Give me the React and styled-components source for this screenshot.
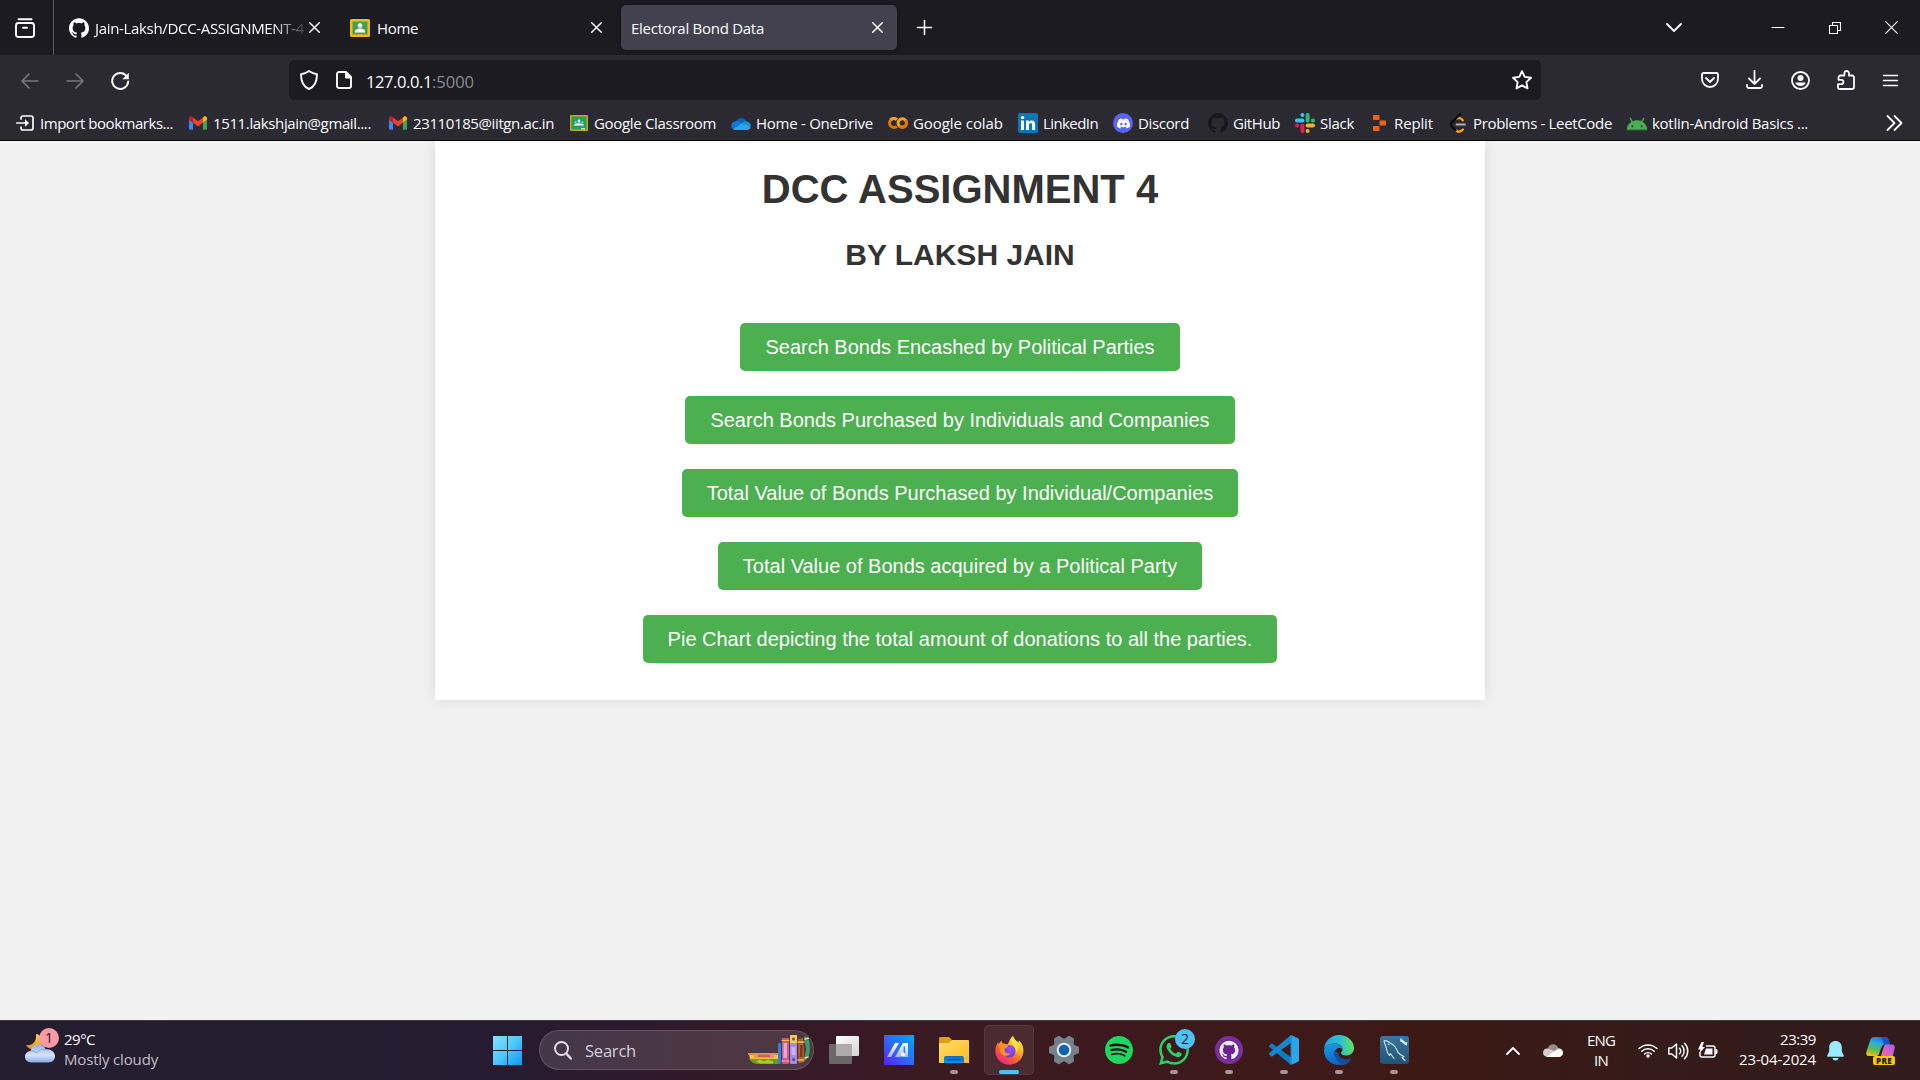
import React, { useLayoutEffect, useRef, useState } from 'react';
import styled, { createGlobalStyle } from 'styled-components';
import { SiDiscord, SiGithub, SiSpotify, SiWhatsapp } from 'react-icons/si';

const Global = createGlobalStyle`
  * { box-sizing: border-box; }
  body { margin: 0; overflow: hidden; background: #f1f1f1; }
  button { border: 0; padding: 0; margin: 0; background: none; color: inherit; font: inherit; }
`;

const ui = '"Open Sans", "Noto Sans", sans-serif';

const Screen = styled.div`
  width: 1920px; height: 1080px;
  display: flex; flex-direction: column;
  font-family: ${ui};
  color: #fbfbfe;
`;

/* ---------- fitted text ---------- */
const FitBox = styled.span`
  display: block; flex: none; white-space: pre; overflow: visible;
  width: ${p => p.$w}px;
  font-size: ${p => p.$size || 15}px;
  line-height: ${p => p.$lh || 20}px;
  color: ${p => p.$color || 'inherit'};
`;
function Fit({ w, size, lh, color, children }) {
  const ref = useRef(null);
  const [ls, setLs] = useState(0);
  useLayoutEffect(() => {
    const n = ref.current.textContent.length;
    const natural = ref.current.getBoundingClientRect().width - ls * n;
    setLs((w - natural) / n);
  }, [w]);
  return (
    <FitBox $w={w} $size={size} $lh={lh} $color={color}>
      <span ref={ref} style={{ letterSpacing: `${ls}px` }}>{children}</span>
    </FitBox>
  );
}

const Svg = styled.svg.attrs(p => ({
  fill: 'none', stroke: 'currentColor', strokeWidth: p.strokeWidth || 1.6,
  strokeLinecap: 'round', strokeLinejoin: 'round',
}))`
  display: block; flex: none; overflow: visible;
`;

/* ---------- tab strip ---------- */
const TabStrip = styled.div`
  height: 55px; display: flex; align-items: center; flex: none;
  background: #1c1b22;
`;
const ViewButton = styled.button`
  width: 54px; height: 55px; padding: 0 0 0 14px;
  border-right: 1px solid #5b5a62;
  display: flex; align-items: center;
`;
const Tab = styled.div`
  height: 45px; width: ${p => p.$w}px; margin-left: ${p => p.$ml}px;
  padding: 0 14px 0 ${p => p.$pl}px;
  display: flex; align-items: center; gap: ${p => p.$gap || 6}px;
  border-radius: 5px;
  background: ${p => (p.$active ? '#42414d' : 'transparent')};
  box-shadow: ${p => (p.$active ? '0 0 4px rgba(0,0,0,.45)' : 'none')};
`;
const TabLabel = styled.div`
  flex: 1; min-width: 0; padding: 1px 0 0 ${p => p.$inset || 0}px;
  mask-image: ${p => (p.$fade ? 'linear-gradient(to left, rgba(0,0,0,.1), #000 34px)' : 'none')};
`;
const WindowControls = styled.div`
  margin-left: auto; height: 55px; display: flex; align-items: center;
`;
const Slot = styled.div`
  width: ${p => p.$w}px; display: flex; flex: none; justify-content: center;
  color: ${p => p.$color || 'inherit'};
`;

/* ---------- navigation ---------- */
const NavBar = styled.div`
  height: 45px; padding-top: 5px; display: flex; flex: none;
  background: #2b2a33;
`;
const NavButtons = styled.div`
  width: 289px; height: 40px; padding: 2px 0 0 7px; display: flex; align-items: center;
`;
const UrlBar = styled.div`
  width: 1252px; height: 40px; padding: 0 8px 0 10px; border-radius: 5px;
  display: flex; align-items: center; background: #1c1b22;
`;
const PageInfo = styled.div`padding-left: 17px;`;
const UrlText = styled.div`
  flex: 1; display: flex; padding: 3px 0 0 14px;
`;
const NavTools = styled.div`
  height: 40px; margin-left: auto; padding-right: 7px; display: flex; align-items: center;
`;

/* ---------- bookmarks ---------- */
const Bookmarks = styled.div`
  height: 41px; padding: 6px 14px 0 15px; flex: none;
  display: flex; align-items: center;
  background: #2b2a33; border-bottom: 1px solid #060608;
`;
const Bookmark = styled.div`
  display: flex; align-items: center; gap: 5px; margin-right: ${p => p.$mr || 15}px;
`;
const MarkIcon = styled.div`
  width: 20px; height: 20px; display: flex; align-items: center; justify-content: center;
`;
const More = styled.div`margin-left: auto; padding-right: 3px;`;

/* ---------- page ---------- */
const Page = styled.main`
  flex: 1; min-height: 0; overflow: hidden; background: #f1f1f1;
  display: flex; justify-content: center; align-items: flex-start;
`;
const Card = styled.section`
  width: 1050px; height: 559px; padding-top: 25px;
  display: flex; flex-direction: column; align-items: center;
  background: #fff; box-shadow: 0 0 13px rgba(0,0,0,.1);
  font-family: "Liberation Sans", Arial, sans-serif; color: #333;
`;
const Title = styled.h1`
  margin: 0; font-size: 40px; line-height: 46px; font-weight: 700;
`;
const Subtitle = styled.h2`
  margin: 26px 0 0; font-size: 30px; line-height: 34px; font-weight: 700;
`;
const Actions = styled.div`
  margin-top: 51px; display: flex; flex-direction: column; align-items: center; gap: 25px;
`;
const Action = styled.button`
  && { height: 48px; padding: 0 25px; border-radius: 5px;
  background: #4caf50; color: #fff; font-size: 20px; line-height: 48px; }
`;

/* ---------- taskbar ---------- */
const Taskbar = styled.footer`
  height: 60px; flex: none; display: flex; align-items: stretch;
  border-top: 1px solid #3c3a42;
  background: linear-gradient(90deg, #241d2f 0, #231e30 280px, #261b30 500px, #33192a 720px, #391a24 900px, #3e191c 1150px, #3d1915 1440px, #361b18 1600px, #311b1d 1920px);
`;
const Weather = styled.div`
  width: 480px; padding-left: 25px; display: flex; gap: 4px;
`;
const WeatherArt = styled.div`position: relative; width: 35px; padding-top: 12px;`;
const Lines = styled.div`
  padding: ${p => p.$pt ?? 8}px 0 ${p => p.$pb || 0}px; display: flex; flex-direction: column;
  align-items: ${p => p.$align || 'flex-start'};
`;
const Badge = styled.span`
  position: absolute; left: ${p => p.$x}px; top: ${p => p.$y}px;
  width: 20px; height: 20px; border-radius: 50%;
  background: ${p => p.$bg}; color: #1b1b1b;
  font-size: 14px; line-height: 20px; text-align: center;
`;
const StartCell = styled.div`width: 59px; display: flex; align-items: center; padding-left: 13px;`;
const SearchBox = styled.div`
  width: 275px; height: 40px; margin-top: 9px; padding: 0 2px 0 14px;
  display: flex; align-items: center; border-radius: 20px; overflow: hidden;
  background: rgba(255,255,255,.13);
  border: 1px solid rgba(255,255,255,.14);
`;
const SearchText = styled.div`flex: 1; padding: 2px 0 0 13px;`;
const Apps = styled.div`display: flex; padding-left: 5px;`;
const AppTile = styled.div`
  position: relative; width: 50px; height: 50px; margin: 4px 5px 0 0;
  display: flex; align-items: center; justify-content: center; border-radius: 5px;
  background: ${p => (p.$active ? 'rgba(255,255,255,.08)' : 'none')};
  border: 1px solid ${p => (p.$active ? 'rgba(255,255,255,.07)' : 'transparent')};
  &::after {
    content: ""; position: absolute; bottom: 0; left: 50%; transform: translateX(-50%);
    width: ${p => (p.$active ? 20 : p.$open ? 8 : 0)}px; height: 4px; border-radius: 2px;
    background: ${p => (p.$active ? '#4cc2ff' : '#a39497')};
  }
`;
const Tray = styled.div`margin-left: auto; display: flex; align-items: center;`;
const TraySlot = styled.div`
  display: flex; justify-content: flex-start; flex: none; width: ${p => p.$w}px;
`;
const CopilotMark = styled.div`
  position: relative; width: 54px; height: 28px;
`;
const PreTag = styled.span`
  position: absolute; left: 7px; top: 19px; width: 22px; height: 9px; border-radius: 2px;
  background: #ffc800; color: #1a1a1a; font: 800 8px/9px ${ui}; letter-spacing: .4px; text-align: center;
`;

/* ---------- icons ---------- */
const Cross = ({ s = 11, w = 1.5 }) => (
  <Svg width={s} height={s} viewBox={`0 0 ${s} ${s}`} strokeWidth={w}><path d={`M.7.7 ${s - .7} ${s - .7}M${s - .7}.7.7 ${s - .7}`} /></Svg>
);
const GitHubMark = ({ size = 20, color = '#fff' }) => <SiGithub size={size} color={color} style={{ flex: 'none' }} />;

const ClassroomTab = () => (
  <Svg width="20" height="18" viewBox="0 0 20 18">
    <rect width="20" height="18" rx="1.5" fill="#f5ba14" stroke="none" />
    <rect x="2.5" y="2.5" width="15" height="13" fill="#4a9f56" stroke="none" />
    <circle cx="10" cy="6.5" r="2.3" fill="#fff" stroke="none" />
    <path d="M5 13.5c0-3 2.5-3.9 5-3.9s5 .9 5 3.9z" fill="#fff" stroke="none" />
  </Svg>
);
const Classroom = () => (
  <Svg width="18" height="16" viewBox="0 0 18 16">
    <rect width="18" height="16" rx="1" fill="#d69e0c" stroke="none" />
    <rect x="1.5" y="1.5" width="15" height="13" fill="#1ea362" stroke="none" />
    <circle cx="9" cy="6" r="1.4" fill="#fff" stroke="none" />
    <circle cx="5.6" cy="7.2" r="1" fill="#a5d6bd" stroke="none" />
    <circle cx="12.4" cy="7.2" r="1" fill="#a5d6bd" stroke="none" />
    <path d="M4 10.5c.5-2 2-1.8 5-2.2 3 .4 4.500.2 5 2.200z" fill="#fff" stroke="none" />
    <rect x="11" y="13" width="4" height="1.500" fill="#d7e9df" stroke="none" />
  </Svg>
);
const Gmail = () => (
  <Svg width="18" height="14" viewBox="52 42 88 66">
    <g stroke="none">
      <path fill="#4285f4" d="M58 108h14V74L52 59v43c0 3.320 2.690 6 6 6" />
      <path fill="#34a853" d="M120 108h14c3.320 0 6-2.690 6-6V59l-20 15" />
      <path fill="#fbbc04" d="M120 48v26l20-15v-8c0-7.420-8.470-11.650-14.400-7.200" />
      <path fill="#ea4335" d="M72 74V48l24 18 24-18v26L96 92" />
      <path fill="#c5221f" d="M52 51v8l20 15V48l-5.600-4.200c-5.940-4.450-14.400-.22-14.400 7.200" />
    </g>
  </Svg>
);
const Import = () => (
  <Svg width="18" height="16" viewBox="0 0 18 16" strokeWidth="1.700">
    <path d="M5 4V3a2 2 0 0 1 2-2h8a2 2 0 0 1 2 2v10a2 2 0 0 1-2 2H7a2 2 0 0 1-2-2v-1M.8 8H10" />
    <path d="M9 4.200 13 8 9 11.800z" fill="currentColor" stroke="none" />
  </Svg>
);
const OneDrive = () => (
  <Svg width="20" height="13" viewBox="0 0 20 13">
    <g stroke="none">
      <path d="M5 4.500C6.500.2 12.800-.8 15.500 4.500L10 8 3 7z" fill="#0364b8" />
      <path d="M4.500 4.200C7 3.500 9 5 11 6.300L2 12C-1 9.500 0 4.700 4.500 4.200z" fill="#0f78d4" />
      <path d="M11 6.300c1.500-1.700 3-2.200 4.700-1.800 2 .3 3.800 2 4.300 4L16 10z" fill="#1490df" />
      <path d="M1.800 12 11 6.300l8.800 3.400c-.3 1.800-1.700 3.100-3.600 3.300H4.600C3.400 13 2.500 12.600 1.800 12z" fill="#28a8ea" />
    </g>
  </Svg>
);
const Colab = () => (
  <Svg width="20" height="12" viewBox="0 0 20 12" strokeWidth="3">
    <path d="M8.800 2.700A4.400 4.400 0 1 0 8.800 9.300" stroke="#e8710a" strokeLinecap="butt" />
    <path d="M2.600 2.900A4.400 4.400 0 0 1 8.800 2.700" stroke="#f9ab00" strokeLinecap="butt" />
    <circle cx="14.300" cy="6" r="4.200" stroke="#f9ab00" />
    <path d="M11.300 9A4.200 4.200 0 0 0 17.300 3" stroke="#e8710a" strokeLinecap="butt" />
  </Svg>
);
const LinkedIn = () => (
  <Svg width="20" height="20" viewBox="0 0 20 20">
    <g stroke="none">
      <rect width="20" height="20" rx="2" fill="#0a78b8" />
      <path d="M3 7.600h3V17H3zM8 7.600h2.800v1.300c.5-.9 1.500-1.500 2.900-1.500 2.700 0 3.400 1.700 3.400 4.200V17h-3v-4.700c0-1.300-.2-2.400-1.500-2.400S11 11 11 12.200V17H8z" fill="#fff" />
      <circle cx="4.500" cy="4.600" r="1.700" fill="#fff" />
    </g>
  </Svg>
);
const DiscordDot = styled.div`
  width: 20px; height: 20px; border-radius: 50%; background: #5865f2; color: #fff;
  display: flex; align-items: center; justify-content: center;
`;
const Slack = () => (
  <Svg width="20" height="20" viewBox="0 0 20 20" strokeWidth="4">
    <path d="M2 7.400h5.400M7.400 2v.1" stroke="#36c5f0" />
    <path d="M12.600 2v5.400M18 7.400h-.1" stroke="#2eb67d" />
    <path d="M18 12.600h-5.400M12.600 18v-.1" stroke="#ecb22e" />
    <path d="M7.400 18v-5.400M2 12.600h.1" stroke="#e01e5a" />
  </Svg>
);
const Replit = () => (
  <Svg width="13" height="16" viewBox="0 0 13 16">
    <g fill="#f26207" stroke="none">
      <rect width="6.500" height="5" rx=".8" /><rect x="6.500" y="5.400" width="6.500" height="5.200" rx=".8" /><rect y="11" width="6.500" height="5" rx=".8" />
    </g>
  </Svg>
);
const LeetCode = () => (
  <Svg width="18" height="20" viewBox="0 0 17 20" strokeWidth="2.300">
    <path d="M6.500 17.500c2.200 1.800 4.800 1.300 7-1M7.500 5.500c2.200-1.600 4.200 0 5.800 1.800" stroke="#ffa116" />
    <path d="M10.500 1.200 1.800 10c-.7 1-.7 2 0 3L6 17.300" stroke="#080808" />
    <path d="M7 11.500h8.500" stroke="#b3b3b3" strokeWidth="1.800" />
  </Svg>
);
const Android = () => (
  <Svg width="20" height="13" viewBox="0 0 20 13">
    <path d="M0 12.500C.3 8.700 2 6.300 4.700 4.900L2.800 1.300 3.500.8 5.600 4.400C8.500 3.200 11.500 3.200 14.400 4.400L16.500.8l.7.5-1.900 3.600C18 6.300 19.700 8.700 20 12.500z" fill="#4caf50" stroke="#4caf50" strokeWidth=".5" />
    <circle cx="5.300" cy="9.200" r="1" fill="#263238" stroke="none" /><circle cx="14.700" cy="9.200" r="1" fill="#263238" stroke="none" />
  </Svg>
);

const bookmarks = [
  { icon: <Import />, text: 'Import bookmarks...', w: 133 },
  { icon: <Gmail />, text: '1511.lakshjain@gmail....', w: 158, mr: 17 },
  { icon: <Gmail />, text: '23110185@iitgn.ac.in', w: 141 },
  { icon: <Classroom />, text: 'Google Classroom', w: 122 },
  { icon: <OneDrive />, text: 'Home - OneDrive', w: 117 },
  { icon: <Colab />, text: 'Google colab', w: 90 },
  { icon: <LinkedIn />, text: 'LinkedIn', w: 55 },
  { icon: <DiscordDot><SiDiscord size={13} /></DiscordDot>, text: 'Discord', w: 51, mr: 19 },
  { icon: <GitHubMark color="#191717" />, text: 'GitHub', w: 47 },
  { icon: <Slack />, text: 'Slack', w: 34 },
  { icon: <Replit />, text: 'Replit', w: 39 },
  { icon: <LeetCode />, text: 'Problems - LeetCode', w: 139 },
  { icon: <Android />, text: 'kotlin-Android Basics ...', w: 156 },
];

const actions = [
  'Search Bonds Encashed by Political Parties',
  'Search Bonds Purchased by Individuals and Companies',
  'Total Value of Bonds Purchased by Individual/Companies',
  'Total Value of Bonds acquired by a Political Party',
  'Pie Chart depicting the total amount of donations to all the parties.',
];

const Books = () => (
  <Svg width="63" height="30" viewBox="0 0 63 30">
    <g stroke="none">
      <path d="M1 19h30v5H2z" fill="#f3c04b" /><path d="M0 18h30v2H0z" fill="#d9932c" />
      <rect x="6" y="18" width="20" height="5" rx="1.500" fill="#f08a80" /><rect x="10" y="19.500" width="12" height="2.500" fill="#c9635e" />
      <path d="M1 24h29v5H10C6 29 3 27.500 1 24z" fill="#6b9c1c" /><path d="M8 26.500l4-2 4 2 4-2 5 2v2H12z" fill="#a4cf31" />
      <rect x="30" y="8" width="3" height="21" rx="1" fill="#2e7fe0" />
      <rect x="34" y="3" width="7" height="26" rx="1" fill="#c9589a" /><rect x="35.500" y="8" width="3.500" height="15" fill="#eba5c9" /><path d="M34 5.500h7M34 26h7" stroke="#f0bd55" strokeWidth="1.200" />
      <rect x="42" y="0" width="7" height="29" rx="1" fill="#a58be6" /><rect x="42" y="0" width="7" height="8" rx="1" fill="#f6cf4a" /><circle cx="45.500" cy="4" r="1.500" fill="#604aa8" /><rect x="43.500" y="12" width="4" height="8" fill="#c8b6f5" /><circle cx="45.500" cy="24.500" r="1.500" fill="#5d43ab" />
      <path d="M50 4l5-1 1.500 24-6 1.500z" fill="#b3602b" /><path d="M50 7h6M50 25h6" stroke="#f1bc62" strokeWidth="1.500" /><path d="M52 10h2.500v12H52z" fill="#7d3b19" />
      <path d="M56 2c4-2 6 4 6 12 0 6-3 11-6 12l2-12z" fill="#3f9a63" /><path d="M57 4l4-1M57 23l3-1" stroke="#cfe08a" strokeWidth="1.500" />
    </g>
  </Svg>
);

const Armoury = () => (
  <Svg width="30" height="30" viewBox="0 0 30 30">
    <defs>
      <linearGradient id="my" x1="0" y1="1" x2="1" y2="0"><stop stopColor="#5a1ff5" /><stop offset=".5" stopColor="#2a6df8" /><stop offset="1" stopColor="#00a8ff" /></linearGradient>
      <linearGradient id="my2" x1="0" y1="1" x2="0" y2="0"><stop stopColor="#fff" stopOpacity=".55" /><stop offset="1" stopColor="#fff" /></linearGradient>
    </defs>
    <rect width="30" height="30" fill="url(#my)" stroke="none" />
    <path d="M3 22 11 8h4L7 22zM11 22l8-14h5v14h-3l-3.500-.5-2.500.5z" fill="url(#my2)" stroke="none" />
    <path d="M20.300 12v6" stroke="#2e78fa" strokeWidth="1.400" /><circle cx="19" cy="19.500" r="2" fill="#fff" stroke="none" />
  </Svg>
);
const Folder = () => (
  <Svg width="30" height="27" viewBox="0 0 30 27">
    <defs><linearGradient id="fo" x1="0" y1="0" x2="1" y2="1"><stop stopColor="#ffdc6b" /><stop offset="1" stopColor="#fbbd1e" /></linearGradient>
      <linearGradient id="fb" x1="0" y1="0" x2="0" y2="1"><stop stopColor="#0c6fc4" /><stop offset="1" stopColor="#1791dd" /></linearGradient></defs>
    <g stroke="none">
      <path d="M0 1.500C0 .5.500 0 1.500 0H10l3 3h15.500c1 0 1.500.5 1.500 1.500V10H0z" fill="#e09f0c" />
      <path d="M0 6h9.500L13 3h15.500c1 0 1.500.5 1.500 1.500V26H0z" fill="url(#fo)" />
      <path d="M5 26v-5a2 2 0 0 1 2-2h16a2 2 0 0 1 2 2v5z" fill="url(#fb)" />
    </g>
    <path d="M9 22.700h13" stroke="#0a4d93" strokeWidth="1.200" />
  </Svg>
);
const Firefox = () => (
  <Svg width="29" height="29" viewBox="0 0 29 29">
    <defs>
      <linearGradient id="ff" x1=".85" y1=".05" x2=".2" y2="1"><stop stopColor="#fff04a" /><stop offset=".35" stopColor="#ffb01f" /><stop offset=".65" stopColor="#ff5a36" /><stop offset="1" stopColor="#e81c8b" /></linearGradient>
      <radialGradient id="fp" cx=".6" cy=".3" r=".8"><stop stopColor="#a04dff" /><stop offset="1" stopColor="#5a3fd0" /></radialGradient>
    </defs>
    <g stroke="none">
      <path d="M18 0c1 3.500 4 5 5.500 6.500.500-1 .3-1.800 0-2.500 3.500 3 5.200 7 4.900 11.500C28 23 22 28.700 14.400 28.700 6.500 28.700.6 23 .3 15.500.2 11.500 1.500 8.500 3.300 6c0 1 .2 1.600.6 2.200C5 6 5.400 5.500 6.600 4.800c0 1.200.3 2 1.200 2.900 2 .1 3.700.2 5 .6C14.500 5.500 15 2 18 0z" fill="url(#ff)" />
      <circle cx="14.300" cy="15.300" r="6.300" fill="url(#fp)" />
      <path d="M3.500 8.500C6 7 10 7 12.500 9c1 .8.500 1.800-.7 2.400-1.900.8-2.500 1.600-2.300 3.100.2 2.500 3.300 3.600 6.200 2.700-1 2.800-7.200 3.700-9.400.5C4.500 15 4.500 11.500 3.500 8.500z" fill="#ff9124" />
      <path d="M18 0c-3 3-2.500 6.200 0 8.600 2.500 2.600 3.400 5.400 2.500 9 3.500-3.600 3.400-9 1-12C19.500 3.500 18.500 2.500 18 0z" fill="#ffe045" />
    </g>
  </Svg>
);
const teeth = [0, 60, 120, 180, 240, 300];
const Settings = () => (
  <Svg width="30" height="28" viewBox="-15 -14 30 28">
    <g stroke="none" fill="#76808a">
      <circle r="11.500" />
      {teeth.map(a => <path key={a} transform={`rotate(${a})`} d="M9-5.500 14-3.500a1.500 1.500 0 0 1 1 1.500v4a1.500 1.500 0 0 1-1 1.500L9 5.500z" />)}
    </g>
    <circle r="6.300" fill="#0f62ae" stroke="#e9edf1" strokeWidth="2" />
  </Svg>
);
const SpotifyDot = styled.div`
  width: 28px; height: 28px; border-radius: 50%; background: #101010; display: flex;
`;
const GitDesktop = () => (
  <Svg width="28" height="28" viewBox="0 0 28 28">
    <circle cx="14" cy="14" r="14" fill="#7b2f9e" stroke="none" />
    <circle cx="14" cy="14" r="10.500" fill="#6a2390" stroke="none" />
    <g transform="translate(4.400 4.400) scale(.8)" stroke="none" fill="#f3ecf7">
      <path d="M12 .297c-6.630 0-12 5.373-12 12 0 5.303 3.438 9.800 8.205 11.385.6.113.82-.258.82-.577 0-.285-.01-1.040-.015-2.040-3.338.724-4.042-1.610-4.042-1.610C4.422 18.070 3.633 17.700 3.633 17.700c-1.087-.744.084-.729.084-.729 1.205.084 1.838 1.236 1.838 1.236 1.070 1.835 2.809 1.305 3.495.998.108-.776.417-1.305.760-1.605-2.665-.3-5.466-1.332-5.466-5.930 0-1.310.465-2.380 1.235-3.220-.135-.303-.540-1.523.105-3.176 0 0 1.005-.322 3.300 1.230.960-.267 1.980-.399 3-.405 1.020.006 2.040.138 3 .405 2.280-1.552 3.285-1.230 3.285-1.230.645 1.653.240 2.873.120 3.176.765.840 1.230 1.910 1.230 3.220 0 4.610-2.805 5.625-5.475 5.920.420.360.810 1.096.810 2.220 0 1.606-.015 2.896-.015 3.286 0 .315.210.690.825.570C20.565 22.092 24 17.592 24 12.297c0-6.627-5.373-12-12-12" />
    </g>
  </Svg>
);
const VSCode = () => (
  <Svg width="30" height="30" viewBox="0 0 30 30">
    <g stroke="none">
      <path d="M.4 10.400 2 8.800c.5-.4 1-.4 1.500 0L22 22.300V30L.4 11.900c-.5-.5-.5-1 0-1.500z" fill="#0d7cc4" />
      <path d="M.4 19.600 2 21.200c.5.4 1 .4 1.500 0L22 7.700V0L.4 18.100c-.5.500-.5 1 0 1.500z" fill="#1488cf" />
      <path d="M22 0l7 3.200c.6.300 1 .9 1 1.600v20.400c0 .7-.4 1.300-1 1.600L22 30c1-1 .8-1.500.8-3V3c0-1.500.2-2-.8-3z" fill="#2ba5ee" />
      <path d="M22 0c.5.500.8 1 .8 3v24c0 2-.3 2.500-.8 3l-.4-.4V.4z" fill="#2ba5ee" />
    </g>
  </Svg>
);
const Edge = () => (
  <Svg width="30" height="30" viewBox="0 0 30 30">
    <defs>
      <linearGradient id="e1" x1="0" y1=".4" x2="1" y2=".4"><stop stopColor="#1fa2e5" /><stop offset=".55" stopColor="#2cc3cf" /><stop offset="1" stopColor="#66e05a" /></linearGradient>
      <linearGradient id="e2" x1="0" y1="0" x2=".4" y2="1"><stop stopColor="#1b9de2" /><stop offset="1" stopColor="#0a63c4" /></linearGradient>
    </defs>
    <g stroke="none">
      <path d="M0 13.500C1 5.500 7.500 0 15 0c8.500 0 15 6 15 13 0 4.500-3.500 7.500-7.500 7.500-3.500 0-5.500-1.300-5.500-2.500 0-.8 1.500-1.700 1.500-4 0-3-3-5.500-7.500-5.500C5.500 8.500 1.500 11 0 13.500z" fill="url(#e1)" />
      <path d="M0 14.500C1.500 10 6 8 11 8.500c4 .3 7.500 2.500 7.500 5.500-3-2.500-8-.5-8 4.500 0 5 5 8.500 10 8.500 2.500 0 4.500-.6 6-1.500C24 28.500 20 30 15 30 6 30-.7 22.500 0 14.500z" fill="url(#e2)" />
      <path d="M10.700 16.500c-1.500 6 3.300 12 9.300 13 3-1 5.500-3 7.200-5.500.3-.5-.1-.8-.6-.6-5 2.300-12.600.3-12.300-6.400z" fill="#124e9c" />
    </g>
  </Svg>
);
const MySQL = () => (
  <Svg width="29" height="28" viewBox="0 0 29 28" strokeWidth="1.100">
    <defs><linearGradient id="ms" x1="0" y1="0" x2="0" y2="1"><stop stopColor="#39759f" /><stop offset="1" stopColor="#205276" /></linearGradient></defs>
    <rect width="29" height="28" rx="3" fill="url(#ms)" stroke="none" />
    <g stroke="#d8e6ef">
      <path d="M4 5c2-1 4.500.5 6 2 3 1 6 4 8 9.500l3 2.500 3 1.500-2 1 3 3M4 5c.5 3 2 5 2.500 8 .5 3 1.500 5 3 6.500l1-2 3.500 5M8 8l.8.5" />
      <path d="M21.500 4.500l4 3.200" strokeWidth="2.400" />
      <path d="M20.800 3l.4 2M26.500 6.800l-.3 2" strokeWidth="1.400" />
    </g>
  </Svg>
);

const Cloud = () => (
  <Svg width="30" height="30" viewBox="0 0 30 30">
    <defs>
      <linearGradient id="cl" x1="0" y1="0" x2="0" y2="1"><stop stopColor="#8fb5f2" /><stop offset=".6" stopColor="#d6e2fa" /><stop offset="1" stopColor="#88a9e6" /></linearGradient>
      <linearGradient id="mo" x1="0" y1="0" x2="0" y2="1"><stop stopColor="#ffd34a" /><stop offset="1" stopColor="#f08a12" /></linearGradient>
    </defs>
    <path d="M11 1c3 0 8 5 6 10-2 6-12 8-16 1 6 1 11-3 10-11z" fill="url(#mo)" stroke="none" />
    <path d="M6.500 29.500C2.500 29.500 0 27 0 23.800 0 20.500 2.500 18 5.700 18 6.500 13.500 10 11.500 13.500 11.500c3.500 0 6 1.800 7 4.800 5.500-.5 9.500 2.500 9.500 7 0 3.700-2.700 6.200-6.500 6.200z" fill="url(#cl)" stroke="none" />
    <path d="M5.700 18c2.500-.5 4.500.5 6 2 1.500-2.500 4-4 8.800-3.700" stroke="#80a4e4" strokeWidth=".9" />
  </Svg>
);

const Copilot = () => (
  <Svg width="29" height="26" viewBox="0 0 29 26">
    <defs>
      <linearGradient id="c1" x1=".6" y1="0" x2=".2" y2="1"><stop stopColor="#1c6ff0" /><stop offset=".35" stopColor="#25b3d8" /><stop offset=".65" stopColor="#58bb55" /><stop offset="1" stopColor="#f3c316" /></linearGradient>
      <linearGradient id="c2" x1="1" y1="0" x2="0" y2="1"><stop stopColor="#a45cf2" /><stop offset=".6" stopColor="#e066b8" /><stop offset="1" stopColor="#fa8350" /></linearGradient>
    </defs>
    <g stroke="none">
      <path d="M8 0h11c2 0 3 1.200 3.600 3l1.400 4.500h-5c-2 0-3 1-3.600 3L13 17c-.6 1.500-1.500 2-3 2H3c-2.500 0-3.300-2-2.500-4.500L4.300 3C5 1 6 0 8 0z" fill="url(#c1)" />
      <path d="M15 0h4c2 0 3 1.200 3.600 3l1.400 4.500h-6z" fill="#1553d0" />
      <path d="M19 7.500h7c2.500 0 3.300 2 2.500 4.500L26 22H14l3.500-11.500z" fill="url(#c2)" />
    </g>
  </Svg>
);

const apps = [
  { icon: <Armoury /> },
  { icon: <Folder />, open: true },
  { icon: <Firefox />, active: true },
  { icon: <Settings /> },
  { icon: <SpotifyDot><SiSpotify size={28} color="#1ed760" /></SpotifyDot> },
  { icon: <SiWhatsapp size={30} color="#25d366" />, open: true, badge: '2' },
  { icon: <GitDesktop />, open: true },
  { icon: <VSCode />, open: true },
  { icon: <Edge />, open: true },
  { icon: <MySQL />, open: true },
];

export default function App() {
  return (
    <Screen>
      <Global />
      <TabStrip>
        <ViewButton>
          <Svg width="22" height="20" viewBox="0 0 22 20" strokeWidth="1.900">
            <rect x="2" y="5" width="18" height="14" rx="2.500" /><path d="M4.500 1.200h13" /><path d="M9 9.700h4" />
          </Svg>
        </ViewButton>
        <Tab $w={276} $ml={4} $pl={11} $gap={3}>
          <GitHubMark />
          <TabLabel $fade $inset={3}><Fit w={209}>Jain-Laksh/DCC-ASSIGNMENT-4</Fit></TabLabel>
          <Cross />
        </Tab>
        <Tab $w={276} $ml={6} $pl={10}>
          <ClassroomTab />
          <TabLabel $inset={1}><Fit w={41}>Home</Fit></TabLabel>
          <Cross />
        </Tab>
        <Tab $w={276} $ml={5} $pl={10} $active>
          <TabLabel><Fit w={133}>Electoral Bond Data</Fit></TabLabel>
          <Cross />
        </Tab>
        <Slot $w={55}><Svg width="15" height="15" viewBox="0 0 15 15"><path d="M7.500.5v14M.5 7.500h14" /></Svg></Slot>
        <WindowControls>
          <Slot $w={150}><Svg width="16" height="9" viewBox="0 0 16 9" strokeWidth="1.800"><path d="m1 1 7 7 7-7" /></Svg></Slot>
          <Slot $w={58}><Svg width="12" height="2" viewBox="0 0 12 2" strokeWidth="1"><path d="M0 .5h12" /></Svg></Slot>
          <Slot $w={56}><Svg width="12" height="12" viewBox="0 0 12 12" strokeWidth="1.100"><path d="M.5 3.500h8v8h-8zM3.500 3.500v-3h8v8h-3" /></Svg></Slot>
          <Slot $w={57}><Cross s={13} w={1.100} /></Slot>
        </WindowControls>
      </TabStrip>

      <NavBar>
        <NavButtons>
          <Slot $w={45} $color="#78777e"><Svg width="18" height="16" viewBox="0 0 18 16"><path d="M17 8H1M8 1 1 8l7 7" /></Svg></Slot>
          <Slot $w={45} $color="#78777e"><Svg width="18" height="16" viewBox="0 0 18 16"><path d="M1 8h16M10 1l7 7-7 7" /></Svg></Slot>
          <Slot $w={46}><Svg width="19" height="18" viewBox="0 0 19 18" strokeWidth="1.900"><path d="M15.500 4A8 8 0 1 0 17.200 9.500" /><path d="M17.800.8v6.500h-6.500z" fill="currentColor" stroke="none" /></Svg></Slot>
        </NavButtons>
        <UrlBar>
          <Svg width="20" height="20" viewBox="0 0 20 20" strokeWidth="1.900"><path d="M10 1c2.800 2 5.300 2.800 8 3.200 0 7-1.700 12.300-8 14.800C3.700 16.500 2 11.200 2 4.200 4.700 3.800 7.200 3 10 1z" /></Svg>
          <PageInfo><Svg width="16" height="18" viewBox="0 0 16 18" strokeWidth="1.900"><path d="M3 1h7l5 5v9a2 2 0 0 1-2 2H3a2 2 0 0 1-2-2V3a2 2 0 0 1 2-2z" /><path d="M9.500 1v6H15z" fill="currentColor" strokeWidth="1" /></Svg></PageInfo>
          <UrlText>
            <Fit w={66} size={16.500} lh={22}>127.0.0.1</Fit>
            <Fit w={42} size={16.500} lh={22} color="#8c8b92">:5000</Fit>
          </UrlText>
          <Svg width="22" height="20" viewBox="0 0 22 20" strokeWidth="1.900"><path d="m11 1.200 2.700 5.700 6.300.9-4.600 4.300 1.100 6.300L11 15.400l-5.500 3 1.100-6.300L2 7.800l6.300-.9z" /></Svg>
        </UrlBar>
        <NavTools>
          <Slot $w={45}><Svg width="18" height="16" viewBox="0 0 18 16" strokeWidth="1.800"><path d="M2.500 1h13A1.500 1.500 0 0 1 17 2.500V7A8 8 0 0 1 1 7V2.500A1.500 1.500 0 0 1 2.500 1z" /><path d="m5 6 4 4 4-4" /></Svg></Slot>
          <Slot $w={45}><Svg width="17" height="18" viewBox="0 0 17 18" strokeWidth="1.800"><path d="M8.500 0v12.500M3 7.500 8.500 13 14 7.500M1 14v1.500A1.700 1.700 0 0 0 2.700 17h11.600A1.700 1.700 0 0 0 16 15.500V14" /></Svg></Slot>
          <Slot $w={46}><Svg width="19" height="19" viewBox="0 0 19 19" strokeWidth="1.800"><circle cx="9.500" cy="9.500" r="8.500" /><circle cx="9.500" cy="7" r="3" fill="currentColor" stroke="none" /><path d="M4.300 11.500h10.400c-.5 2-2.500 3.500-5.200 3.500s-4.700-1.500-5.200-3.500z" fill="currentColor" stroke="none" /></Svg></Slot>
          <Slot $w={45}><Svg width="18" height="20" viewBox="0 0 18 20" strokeWidth="1.800"><path d="M2.500 19H15a2 2 0 0 0 2-2V7.500A2 2 0 0 0 15 5.500h-3V3.300a2.300 2.300 0 0 0-4.600 0v2.200H3.500A2 2 0 0 0 1.500 7.500v2.300h2.700a2.200 2.200 0 0 1 0 4.400H1V17.500A1.500 1.500 0 0 0 2.500 19z" /></Svg></Slot>
          <Slot $w={45}><Svg width="15" height="13" viewBox="0 0 15 13" strokeWidth="1.400"><path d="M.5 1.500h14M.5 6.500h14M.5 11.500h14" /></Svg></Slot>
        </NavTools>
      </NavBar>

      <Bookmarks>
        {bookmarks.map((b, i) => (
          <Bookmark key={i} $mr={b.mr}>
            <MarkIcon>{b.icon}</MarkIcon>
            <Fit w={b.w}>{b.text}</Fit>
          </Bookmark>
        ))}
        <More><Svg width="17" height="16" viewBox="0 0 17 16" strokeWidth="1.800"><path d="m1.500 1 7 7-7 7M8.500 1l7 7-7 7" /></Svg></More>
      </Bookmarks>

      <Page>
        <Card>
          <Title>DCC ASSIGNMENT 4</Title>
          <Subtitle>BY LAKSH JAIN</Subtitle>
          <Actions>{actions.map(a => <Action key={a}>{a}</Action>)}</Actions>
        </Card>
      </Page>

      <Taskbar>
        <Weather>
          <WeatherArt>
            <Cloud />
            <Badge $x={14} $y={7} $bg="#ff99a4">1</Badge>
          </WeatherArt>
          <Lines>
            <Fit w={31}>29°C</Fit>
            <Fit w={94} color="#c3bfc6">Mostly cloudy</Fit>
          </Lines>
        </Weather>
        <StartCell>
          <Svg width="29" height="29" viewBox="0 0 29 29">
            <defs><linearGradient id="wi" gradientUnits="userSpaceOnUse" x1="0" y1="0" x2="29" y2="29"><stop stopColor="#8be0ff" /><stop offset=".5" stopColor="#4cc8fb" /><stop offset="1" stopColor="#0f95f5" /></linearGradient></defs>
            <path d="M0 0h14v14H0zM15 0h14v14H15zM0 15h14v14H0zM15 15h14v14H15z" fill="url(#wi)" stroke="none" />
          </Svg>
        </StartCell>
        <SearchBox>
          <Svg width="18" height="19" viewBox="0 0 18 19" strokeWidth="2"><circle cx="7.500" cy="7.500" r="6.500" stroke="#e2dde4" /><path d="m12.500 12.800 4.300 4.700" stroke="#e2dde4" strokeWidth="2.400" /></Svg>
          <SearchText><Fit w={51} size={16.500} lh={22} color="#d5d0d7">Search</Fit></SearchText>
          <Books />
        </SearchBox>
        <Apps>
          <AppTile>
            <Svg width="30" height="28" viewBox="0 0 30 28">
              <defs><linearGradient id="tv" x1="0" y1="0" x2="1" y2="1"><stop stopColor="#fff" /><stop offset="1" stopColor="#d4d4d4" /></linearGradient></defs>
              <rect x="7" y="0" width="23" height="20" rx="1" fill="url(#tv)" stroke="none" />
              <rect x="0" y="8" width="23" height="20" rx="1" fill="#6b6667" stroke="none" />
              <rect x="7" y="8" width="16" height="12" fill="#adabac" stroke="none" />
            </Svg>
          </AppTile>
          {apps.map((a, i) => (
            <AppTile key={i} $active={a.active} $open={a.open}>
              {a.icon}
              {a.badge && <Badge $x={25} $y={3} $bg="#4cc2ff">{a.badge}</Badge>}
            </AppTile>
          ))}
        </Apps>
        <Tray>
          <TraySlot $w={37}><Svg width="14" height="8" viewBox="0 0 14 8" strokeWidth="1.900"><path d="m1 7 6-6 6 6" /></Svg></TraySlot>
          <TraySlot $w={44}>
            <Svg width="20" height="13" viewBox="0 0 20 13"><g stroke="none">
              <path d="M4.800 4.500C6-.5 13.500-1.500 15.300 4.300L11 7z" fill="#9a8c8b" />
              <path d="M0 8.500C0 6 2 4.300 4.800 4.500L12 7l-9 5.600C1 12 0 10.500 0 8.500z" fill="#d4cdcc" />
              <path d="M3 12.600 12 6.500l3.300-2.200C18.500 4.500 20 6.500 20 8.700c0 2.500-2 4.300-4.300 4.300H4.500z" fill="#fff" />
            </g></Svg>
          </TraySlot>
          <TraySlot $w={51}>
            <Lines $pt={0} $pb={1} $align="center"><Fit w={28}>ENG</Fit><Fit w={14}>IN</Fit></Lines>
          </TraySlot>
          <TraySlot $w={30}><Svg width="20" height="15" viewBox="0 0 20 15" strokeWidth="1.500"><path d="M1 5.500a13 13 0 0 1 18 0M3.800 8.300a9 9 0 0 1 12.400 0M6.600 11a5 5 0 0 1 6.800 0" /><circle cx="10" cy="13" r="1.700" fill="currentColor" stroke="none" /></Svg></TraySlot>
          <TraySlot $w={30}><Svg width="20" height="18" viewBox="0 0 20 18" strokeWidth="1.500"><path d="M.8 6v6h3L8.500 16V2L3.800 6zM11.500 6.200a4 4 0 0 1 0 5.600M14 3.800a7.400 7.400 0 0 1 0 10.400M16.500 1.200a11 11 0 0 1 0 15.600" /></Svg></TraySlot>
          <TraySlot $w={41}><Svg width="20" height="17" viewBox="0 0 20 17" strokeWidth="1.500"><path d="M8.500 4H15a2 2 0 0 1 2 2v7a2 2 0 0 1-2 2H4a2 2 0 0 1-2-2v-2.500" /><path d="M6 12.500 8 6.500h6.500v6z" fill="currentColor" stroke="none" /><path d="M18 7.500h1v4h-1z" fill="currentColor" strokeWidth="1" /><path d="M3.500 0 0 7.500h2.500L1.200 11.500 7 5H4.300L6 0z" fill="currentColor" stroke="none" /></Svg></TraySlot>
          <TraySlot $w={88}>
            <Lines $pt={0} $pb={3} $align="flex-end"><Fit w={36}>23:39</Fit><Fit w={77}>23-04-2024</Fit></Lines>
          </TraySlot>
          <TraySlot $w={39}><Svg width="17" height="20" viewBox="0 0 17 20"><path d="M8.500 0C4.800 0 2.200 2.700 2.200 6.300v4.200L.3 14.500c-.3.700 0 1.300.8 1.300h14.800c.8 0 1.100-.6.8-1.300l-1.900-4V6.300C14.800 2.700 12.200 0 8.500 0zM5.500 17h6c-.3 1.700-1.500 2.500-3 2.500s-2.700-.8-3-2.500z" fill="#99ebff" stroke="none" /></Svg></TraySlot>
          <CopilotMark><Copilot /><PreTag>PRE</PreTag></CopilotMark>
        </Tray>
      </Taskbar>
    </Screen>
  );
}
